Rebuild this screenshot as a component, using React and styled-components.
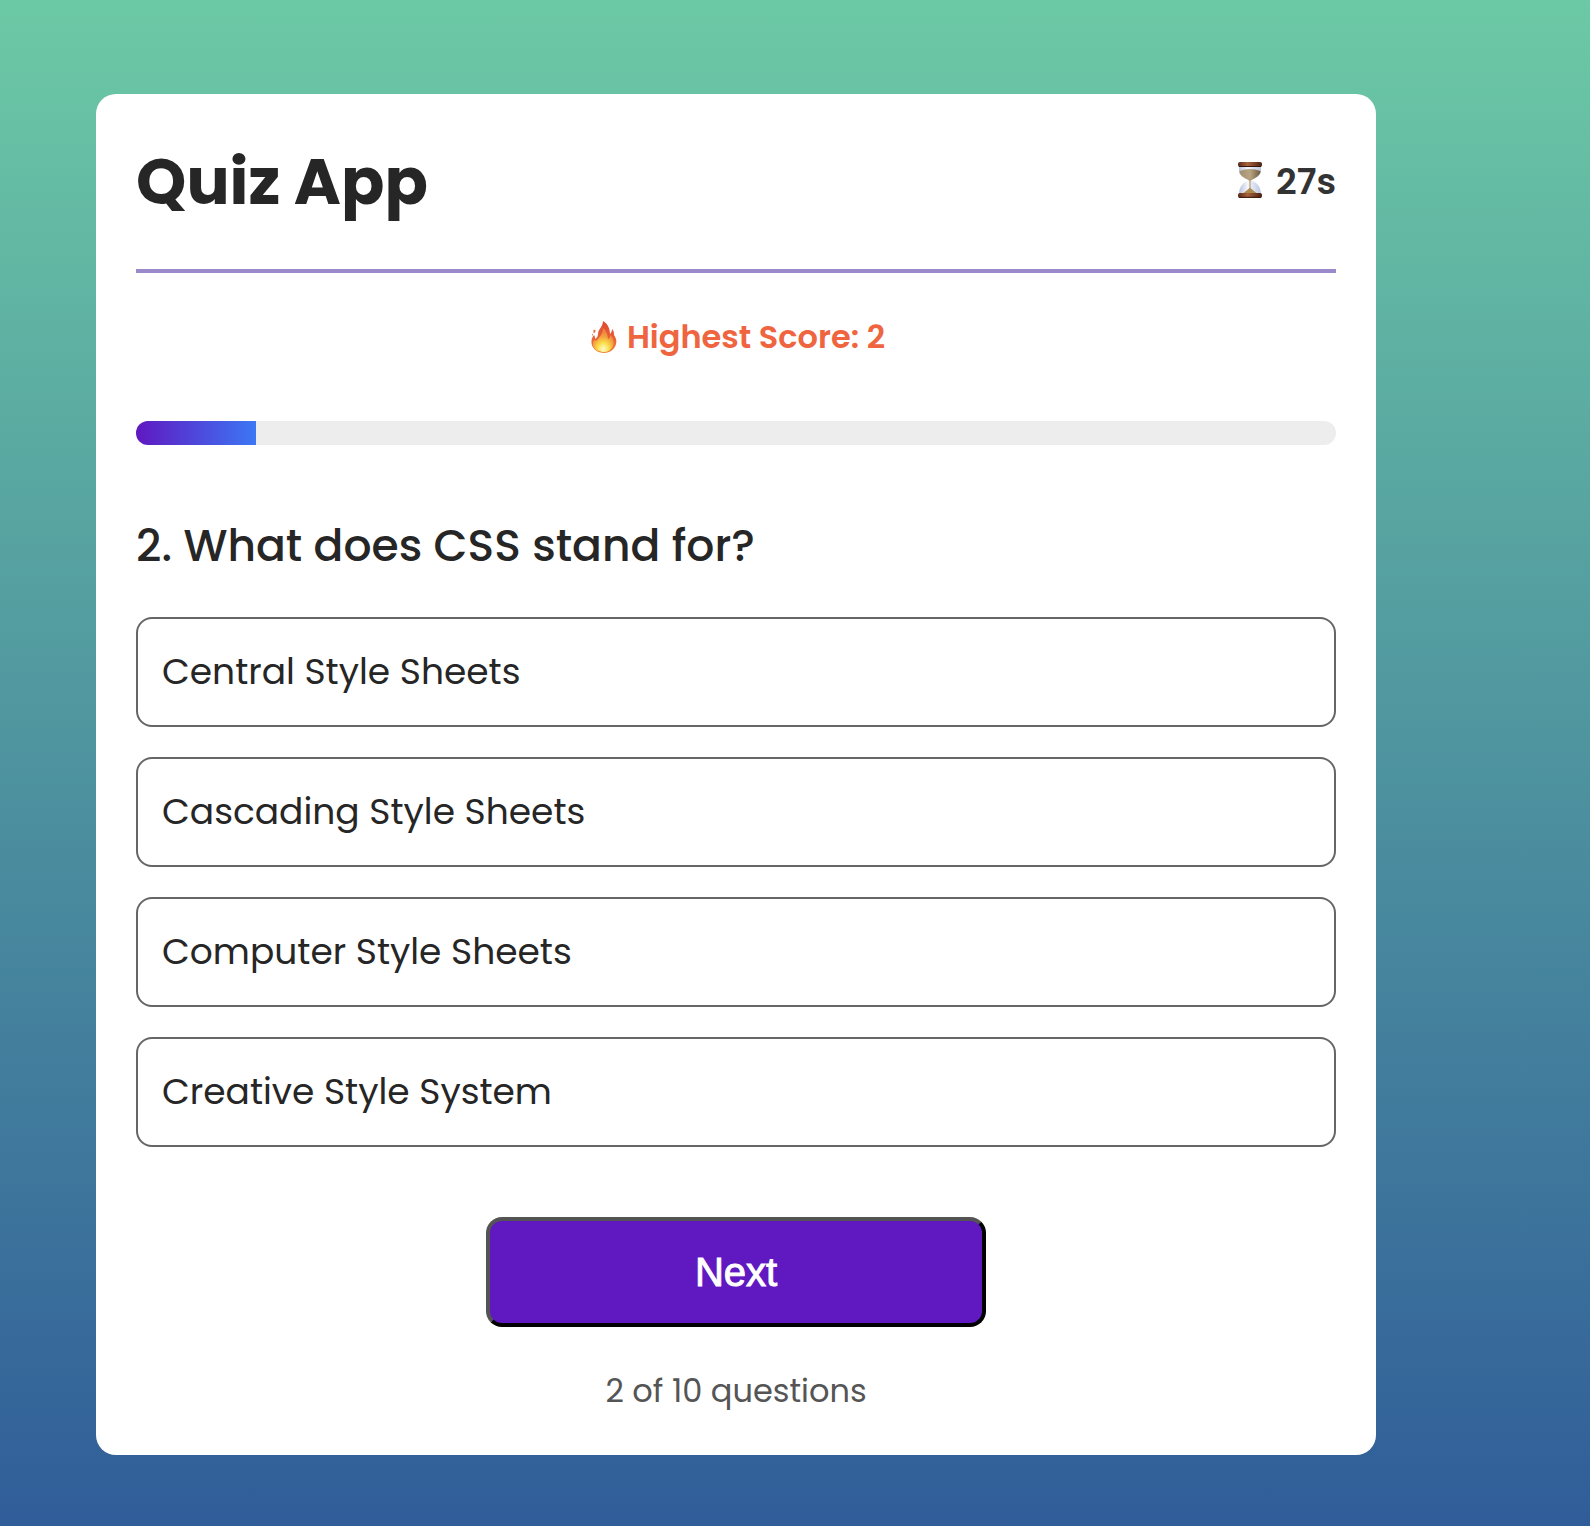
import React, { useState } from "react";
import styled, { createGlobalStyle } from "styled-components";

const GlobalStyle = createGlobalStyle`
  * {
    box-sizing: border-box;
  }
  body {
    margin: 0;
    font-family: Poppins, Inter, "Open Sans", sans-serif;
    color: #262626;
  }
  button {
    font-family: inherit;
    cursor: pointer;
  }
`;

const Page = styled.main`
  min-height: 100vh;
  padding: 94px 214px 71px 96px;
  background: linear-gradient(to bottom, #6cc9a5, #305d99);
`;

const Card = styled.section`
  display: flex;
  flex-direction: column;
  padding: 40px;
  border-radius: 20px;
  background: #fff;
`;

const Header = styled.header`
  display: flex;
  align-items: center;
  justify-content: space-between;
  padding-bottom: 39px;
  border-bottom: 4px solid #9b8acb;
`;

const Title = styled.h1`
  margin: 0;
  font-size: 64px;
  line-height: 96px;
  font-weight: 700;
`;

const Timer = styled.div`
  display: flex;
  align-items: center;
  gap: 14px;
  font-size: 36px;
  line-height: 48px;
  font-weight: 600;
  color: #333;
`;

const HighScore = styled.p`
  display: flex;
  align-items: center;
  justify-content: center;
  gap: 10px;
  margin: 40px 0 60px;
  font-size: 32px;
  line-height: 48px;
  font-weight: 600;
  color: #ee6540;
`;

const Track = styled.div`
  height: 24px;
  overflow: hidden;
  border-radius: 12px;
  background: #ededed;
`;

const Fill = styled.div`
  height: 100%;
  background: linear-gradient(to right, #6018c1, #3c77f4);
`;

const Question = styled.h2`
  margin: 69px 0 39px;
  font-size: 44px;
  line-height: 64px;
  font-weight: 500;
`;

const Options = styled.div`
  display: grid;
  gap: 30px;
`;

const Option = styled.button`
  padding: 28px 24px;
  border: 2px solid #666;
  border-radius: 16px;
  background: #fff;
  color: #262626;
  font-size: 36px;
  line-height: 50px;
  text-align: left;
`;

const NextButton = styled.button`
  align-self: center;
  width: 500px;
  max-width: 100%;
  margin: 70px 0 40px;
  padding: 26px 24px;
  border: 4px outset #000;
  border-radius: 16px;
  background: #6018c1;
  color: #fff;
  font-family: Arial, "Liberation Sans", sans-serif;
  font-size: 40px;
  line-height: 50px;
  -webkit-text-stroke: 1px #fff;
`;

const Footer = styled.p`
  margin: 0;
  font-size: 32px;
  line-height: 48px;
  text-align: center;
  color: #555;
`;

function Hourglass() {
  return (
    <svg width="24" height="40" viewBox="0 0 24 40" aria-hidden="true">
      <defs>
        <linearGradient id="wood" x1="0" x2="1">
          <stop offset="0" stopColor="#5a2a18" />
          <stop offset=".4" stopColor="#a8623c" />
          <stop offset="1" stopColor="#4a2012" />
        </linearGradient>
        <linearGradient id="sand" x1="0" x2="1">
          <stop offset="0" stopColor="#a39070" />
          <stop offset=".5" stopColor="#b8a482" />
          <stop offset="1" stopColor="#6e5b3c" />
        </linearGradient>
        <linearGradient id="glass" x1="0" x2="1">
          <stop offset="0" stopColor="#b9c2dd" />
          <stop offset=".4" stopColor="#f6f8fd" />
          <stop offset="1" stopColor="#bcc6e2" />
        </linearGradient>
      </defs>
      <path d="M1 4h22v5c0 5-6 7-10 9.500C18 20 23 24 23 32H1c0-8 5-12 10-13.500C7 16 1 14 1 9z" fill="url(#glass)" />
      <path d="M1.500 9q10.500-4 21 0c0 5-6 7-9.500 9.500h-2C7 16 1.500 14 1.500 9z" fill="url(#sand)" />
      <path d="M11.500 17h1v9c2 2 5 4 7 6h-15c2-2 5-4 7-6z" fill="#ad8950" />
      <rect x="0" y="0" width="24" height="5" rx="2" fill="url(#wood)" />
      <rect x="0" y="31" width="24" height="5" rx="2" fill="url(#wood)" />
      <path d="M1 4.500h22M1 35.300h22" stroke="#351609" strokeWidth="1" />
    </svg>
  );
}

function Flame() {
  return (
    <svg width="30" height="32" viewBox="-4 0 30 32" aria-hidden="true">
      <defs>
        <linearGradient id="flameOuter" x1="0" y1="0" x2="0" y2="1">
          <stop offset="0" stopColor="#df4930" />
          <stop offset=".55" stopColor="#e86036" />
          <stop offset="1" stopColor="#ee8636" />
        </linearGradient>
        <radialGradient id="flameInner" cx=".5" cy=".88" r=".75">
          <stop offset="0" stopColor="#fffbd0" />
          <stop offset=".35" stopColor="#fbe04c" />
          <stop offset=".7" stopColor="#f3a03e" />
          <stop offset="1" stopColor="#ed8440" />
        </radialGradient>
      </defs>
      <path
        d="M12 0c5 3 7 8 7 13 1-1 2-3 2-5 2 2 2 4 2 6 2 3 3 6 2 9-1 5-6 9-12 9S1 28 .5 22c-.3-4 1-6 2.500-8 1 1 1 3 1 4 2-1 3-3 3-5 0-5 5-7 5-13z"
        fill="url(#flameOuter)"
      />
      <path
        d="M12 7c5 4 4 9 5.500 11 1-1 2-2 2-4 3 4 4 8 2.500 11-2 4-5 6-9 6S3 29 2 24c0-2 0-4 1-5 1 1 2 1 3 0 3-3 6-7 6-12z"
        fill="url(#flameInner)"
      />
      <path d="M2.500 9q2-1 2 1t-2 2zM1 13.500l1-1v2.500z" fill="#e86440" />
    </svg>
  );
}

const quiz = {
  question: "What does CSS stand for?",
  options: [
    "Central Style Sheets",
    "Cascading Style Sheets",
    "Computer Style Sheets",
    "Creative Style System",
  ],
};

export default function App() {
  const [answered] = useState(1);
  const total = 10;

  return (
    <>
      <GlobalStyle />
      <Page>
        <Card>
          <Header>
            <Title>Quiz App</Title>
            <Timer>
              <Hourglass />
              27s
            </Timer>
          </Header>
          <HighScore>
            <Flame />
            Highest Score: 2
          </HighScore>
          <Track
            role="progressbar"
            aria-valuenow={answered}
            aria-valuemin={0}
            aria-valuemax={total}
          >
            <Fill style={{ width: `${(answered / total) * 100}%` }} />
          </Track>
          <Question>
            {answered + 1}. {quiz.question}
          </Question>
          <Options>
            {quiz.options.map((option) => (
              <Option key={option} type="button">
                {option}
              </Option>
            ))}
          </Options>
          <NextButton type="button">Next</NextButton>
          <Footer>
            {answered + 1} of {total} questions
          </Footer>
        </Card>
      </Page>
    </>
  );
}
